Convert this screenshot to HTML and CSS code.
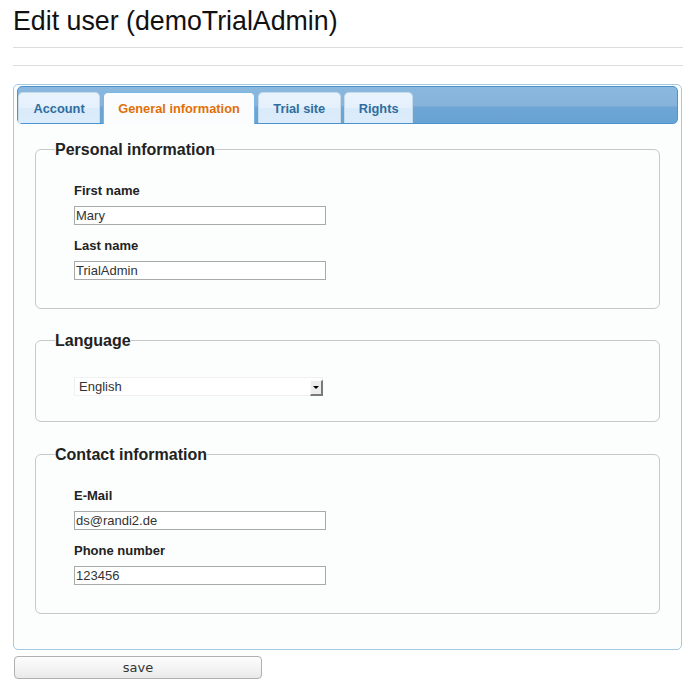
FILE: index.html
```html
<!DOCTYPE html>
<html lang="en">
<head>
<meta charset="utf-8">
<title>Edit user</title>
<link rel="stylesheet" href="styles.css">
</head>
<body>
<div class="page">
  <h1 class="title">Edit user (demoTrialAdmin)</h1>
  <hr class="rule rule-first">
  <hr class="rule rule-second">
  <form class="user-form">
    <div class="tabs">
      <ul class="tab-bar">
        <li class="tab"><a class="tab-link">Account</a></li>
        <li class="tab tab-active"><a class="tab-link">General information</a></li>
        <li class="tab"><a class="tab-link">Trial site</a></li>
        <li class="tab tab-last"><a class="tab-link">Rights</a></li>
      </ul>
      <div class="panel">
        <fieldset class="group group-first">
          <legend class="group-title">Personal information</legend>
          <div class="fields">
            <label class="field-label" for="firstname">First name</label>
            <input class="text-input" id="firstname" type="text" value="Mary">
            <label class="field-label" for="lastname">Last name</label>
            <input class="text-input" id="lastname" type="text" value="TrialAdmin">
          </div>
        </fieldset>
        <fieldset class="group group-lang">
          <legend class="group-title">Language</legend>
          <div class="fields">
            <div class="select-wrap">
              <select class="select-input">
                <option>English</option>
                <option>Deutsch</option>
              </select>
              <span class="select-arrow"></span>
            </div>
          </div>
        </fieldset>
        <fieldset class="group group-contact">
          <legend class="group-title">Contact information</legend>
          <div class="fields">
            <label class="field-label" for="email">E-Mail</label>
            <input class="text-input" id="email" type="text" value="ds@randi2.de">
            <label class="field-label" for="phone">Phone number</label>
            <input class="text-input" id="phone" type="text" value="123456">
          </div>
        </fieldset>
      </div>
    </div>
    <button class="save-button" type="button">save</button>
  </form>
</div>
</body>
</html>
```

FILE: styles.css
```css
html, body {
  margin: 0;
  padding: 0;
  background: #ffffff;
}

.page {
  padding: 6px 0 0 13px;
  width: 670px;
  font-family: "Liberation Sans", Arial, sans-serif;
  color: #222;
}

.title {
  margin: 0 0 11px 0;
  font-size: 26.75px;
  line-height: 30px;
  font-weight: normal;
  color: #111;
}

.rule {
  border: 0;
  height: 1px;
  margin: 0;
  background: #dcdcdc;
}

.rule-second {
  margin-top: 17px;
}

.user-form {
  margin: 18px 0 0 0;
}

.tabs {
  width: 669px;
  box-sizing: border-box;
  border: 1px solid #a6c9e2;
  border-radius: 5px;
  background: #fcfdfd;
  padding: 1px 3px 0 3px;
}

.tab-bar {
  list-style: none;
  margin: 0;
  padding: 4px 0 0 0;
  display: flex;
  align-items: flex-end;
  height: 32px;
  border: 1px solid #4a93d2;
  border-radius: 5px;
  background: linear-gradient(#8ab8de 0%, #85b3da 52%, #6da6d5 56%, #69a3d3 100%);
}

.tab {
  margin: 0 3px 0 0;
  border: 1px solid #c5dbec;
  border-bottom: 0;
  border-radius: 5px 5px 0 0;
  background: linear-gradient(#eaf4fd 0%, #e4f0fc 50%, #d9eafa 52%, #dcecfb 100%);
}

.tab-link {
  display: block;
  padding: 8px 14.5px 7px 14.5px;
  font-size: 12.8px;
  line-height: 15px;
  font-weight: bold;
  color: #2e6e9e;
  white-space: nowrap;
}

.tab-last .tab-link {
  padding-left: 14px;
  padding-right: 13.5px;
}

.tab-active {
  border-color: #79b7e7;
  background: #fbfcfd;
  margin-bottom: -1px;
}

.tab-active .tab-link {
  color: #e17009;
  padding-left: 14px;
  padding-right: 14px;
  padding-bottom: 8px;
}

.panel {
  padding: 16px 18px 35px 18px;
}

.group {
  margin: 22px 0 0 0;
  padding: 24px 18px 28px 19px;
  border: 1px solid #c8c8c8;
  border-radius: 6px;
  min-width: 0;
}

.group-first {
  margin-top: 0;
}

.group-contact {
  margin-top: 23px;
}

.group-lang {
  padding-top: 27px;
  padding-bottom: 25px;
}

.group-title {
  padding: 0;
  font-size: 16px;
  line-height: 19px;
  font-weight: bold;
  color: #222;
}

.fields {
  margin-left: 19px;
}

.field-label {
  display: block;
  margin-bottom: 8px;
  font-size: 13px;
  line-height: 15px;
  font-weight: bold;
  color: #222;
}

.text-input {
  display: block;
  box-sizing: border-box;
  width: 252px;
  height: 19px;
  margin: 0 0 13px 0;
  padding: 0 1px;
  border: 1px solid #a9a9a9;
  background: #fff;
  font-family: "Liberation Sans", Arial, sans-serif;
  font-size: 13px;
  color: #333;
  outline: none;
}

.text-input:last-child {
  margin-bottom: 0;
}

.select-wrap {
  position: relative;
  width: 249px;
  height: 19px;
}

.select-input {
  -webkit-appearance: none;
  appearance: none;
  display: block;
  box-sizing: border-box;
  width: 249px;
  height: 19px;
  margin: 0;
  padding: 0 0 0 4px;
  border: 1px solid #f0f0f0;
  border-radius: 0;
  background: #fff;
  font-family: "Liberation Sans", Arial, sans-serif;
  font-size: 13px;
  color: #333;
  outline: none;
}

.select-arrow {
  position: absolute;
  right: 0;
  bottom: 0;
  width: 10px;
  height: 13px;
  border-top: 1px solid #fafafa;
  border-left: 1px solid #fafafa;
  border-right: 2px solid #7a7a7a;
  border-bottom: 2px solid #7a7a7a;
  background: #ededed;
}

.select-arrow::after {
  content: "";
  position: absolute;
  left: 2px;
  top: 5px;
  border-left: 3px solid transparent;
  border-right: 3px solid transparent;
  border-top: 3px solid #000;
}

.save-button {
  display: block;
  box-sizing: border-box;
  width: 248px;
  height: 23px;
  margin: 6px 0 0 1px;
  padding: 0;
  border: 1px solid #b0b0b0;
  border-radius: 4px;
  background: linear-gradient(#fdfdfd 0%, #f2f2f2 60%, #e9e9e9 100%);
  font-family: "DejaVu Sans", sans-serif;
  font-size: 13px;
  color: #333;
}
```
